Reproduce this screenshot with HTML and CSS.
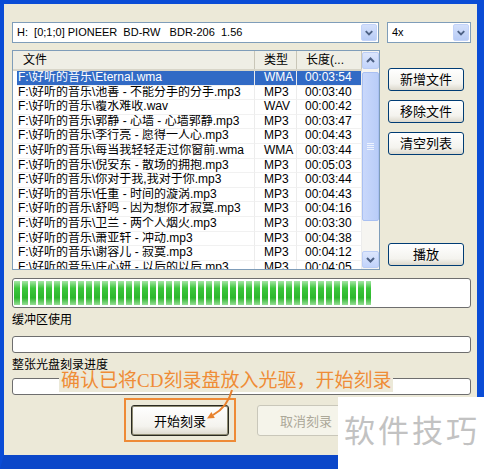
FILE: index.html
```html
<!DOCTYPE html>
<html lang="zh-CN">
<head>
  <meta charset="UTF-8">
  <title>刻录</title>
  <link rel="stylesheet" href="styles.css">
</head>
<body>
<div class="page">
  <div class="window">

    <div class="toolbar">
      <div class="combo combo-drive">
        <span class="combo-text">H:  [0;1;0] PIONEER  BD-RW   BDR-206  1.56</span>
        <span class="combo-btn"><svg width="15" height="17" viewBox="0 0 15 17"><path d="M4 7 L7.5 10.5 L11 7" fill="none" stroke="#4D6185" stroke-width="2"/></svg></span>
      </div>
      <div class="combo combo-speed">
        <span class="combo-text">4x</span>
        <span class="combo-btn"><svg width="15" height="17" viewBox="0 0 15 17"><path d="M4 7 L7.5 10.5 L11 7" fill="none" stroke="#4D6185" stroke-width="2"/></svg></span>
      </div>
    </div>

    <div class="main">
      <div class="listview">
        <div class="lv-cols">
          <div class="lv-header">
            <div class="hd hd-file">文件</div>
            <div class="hd">类型</div>
            <div class="hd">长度(...</div>
          </div>
          <div class="lv-body">
            <div class="row selected"><div class="cell cell-file">F:\好听的音乐\Eternal.wma</div><div class="cell">WMA</div><div class="cell cell-len">00:03:54</div></div>
            <div class="row"><div class="cell cell-file">F:\好听的音乐\池善 - 不能分手的分手.mp3</div><div class="cell">MP3</div><div class="cell cell-len">00:03:40</div></div>
            <div class="row"><div class="cell cell-file">F:\好听的音乐\覆水难收.wav</div><div class="cell">WAV</div><div class="cell cell-len">00:00:42</div></div>
            <div class="row"><div class="cell cell-file">F:\好听的音乐\郭静 - 心墙 - 心墙郭静.mp3</div><div class="cell">MP3</div><div class="cell cell-len">00:03:47</div></div>
            <div class="row"><div class="cell cell-file">F:\好听的音乐\李行亮 - 愿得一人心.mp3</div><div class="cell">MP3</div><div class="cell cell-len">00:04:43</div></div>
            <div class="row"><div class="cell cell-file">F:\好听的音乐\每当我轻轻走过你窗前.wma</div><div class="cell">WMA</div><div class="cell cell-len">00:03:44</div></div>
            <div class="row"><div class="cell cell-file">F:\好听的音乐\倪安东 - 散场的拥抱.mp3</div><div class="cell">MP3</div><div class="cell cell-len">00:05:03</div></div>
            <div class="row"><div class="cell cell-file">F:\好听的音乐\你对于我,我对于你.mp3</div><div class="cell">MP3</div><div class="cell cell-len">00:03:44</div></div>
            <div class="row"><div class="cell cell-file">F:\好听的音乐\任重 - 时间的漩涡.mp3</div><div class="cell">MP3</div><div class="cell cell-len">00:04:43</div></div>
            <div class="row"><div class="cell cell-file">F:\好听的音乐\舒鸣 - 因为想你才寂寞.mp3</div><div class="cell">MP3</div><div class="cell cell-len">00:04:16</div></div>
            <div class="row"><div class="cell cell-file">F:\好听的音乐\卫兰 - 两个人烟火.mp3</div><div class="cell">MP3</div><div class="cell cell-len">00:03:30</div></div>
            <div class="row"><div class="cell cell-file">F:\好听的音乐\萧亚轩 - 冲动.mp3</div><div class="cell">MP3</div><div class="cell cell-len">00:04:38</div></div>
            <div class="row"><div class="cell cell-file">F:\好听的音乐\谢容儿 - 寂寞.mp3</div><div class="cell">MP3</div><div class="cell cell-len">00:04:12</div></div>
            <div class="row"><div class="cell cell-file">F:\好听的音乐\庄心妍 - 以后的以后.mp3</div><div class="cell">MP3</div><div class="cell cell-len">00:04:05</div></div>
          </div>
        </div>
        <div class="scrollbar">
          <div class="sb-btn"><svg width="15" height="15" viewBox="0 0 15 15"><path d="M4 9 L7.5 5.5 L11 9" fill="none" stroke="#4D6185" stroke-width="2"/></svg></div>
          <div class="sb-thumb"><span></span><span></span><span></span><span></span></div>
          <div class="sb-track"></div>
          <div class="sb-btn"><svg width="15" height="15" viewBox="0 0 15 15"><path d="M4 6 L7.5 9.5 L11 6" fill="none" stroke="#4D6185" stroke-width="2"/></svg></div>
        </div>
      </div>

      <div class="side-buttons">
        <button class="btn btn-side">新增文件</button>
        <button class="btn btn-side">移除文件</button>
        <button class="btn btn-side">清空列表</button>
        <button class="btn btn-side btn-play">播放</button>
      </div>
    </div>

    <div class="progress progress-main"><div class="progress-fill" style="width:357px"></div></div>
    <div class="label">缓冲区使用</div>
    <div class="progress progress-thin"></div>
    <div class="label">整张光盘刻录进度</div>
    <div class="progress progress-thin progress-last"></div>

    <div class="actions">
      <button class="btn btn-start">开始刻录</button>
      <button class="btn btn-cancel" disabled>取消刻录</button>
    </div>
  </div>

  <!-- annotation drawn over the dialog -->
  <div class="callout-text">确认已将CD刻录盘放入光驱，开始刻录</div>
  <div class="callout-box"></div>
  <svg class="callout-arrow" width="484" height="469" viewBox="0 0 484 469">
    <path d="M232 390 C229 402 222 410 213 415" fill="none" stroke="#E8822E" stroke-width="2"/>
    <polygon points="207,418.5 214.8,418.1 211.4,412.1" fill="#E8822E"/>
  </svg>

  <div class="watermark">软件技巧</div>
</div>
</body>
</html>
```

FILE: styles.css
```css
* { box-sizing: border-box; margin: 0; padding: 0; }

body { font: 12px "Liberation Sans", "Noto Sans CJK SC", sans-serif; color: #000; background: #ECE9D8; }

.page { position: relative; width: 484px; height: 469px; overflow: hidden; }

.window { height: 469px; display: flex; flex-direction: column; background: #ECE9D8;
  border-top: 4px solid #0A4CD6; border-left: 4px solid #0A4CD6; border-right: 7px solid #0A4CD6; border-bottom: 14px solid #0B47C9; }

/* combo boxes */
.toolbar { display: flex; gap: 8px; margin: 18px 6px 0 8px; height: 21px; }
.combo { display: flex; align-items: center; background: #fff; border: 1px solid #7F9DB9; padding: 1px; }
.combo-drive { width: 367px; }
.combo-speed { width: 84px; }
.combo-text { flex: 1; padding-left: 3px; font-size: 11px; line-height: 17px; white-space: pre; overflow: hidden; }
.combo-btn { width: 16px; height: 17px; display: flex; align-items: center; justify-content: center;
  background: linear-gradient(#D4E0FB, #B8CCF6); border: 1px solid #C3D3F9; border-radius: 2px; }

/* file list */
.main { display: flex; margin: 7px 0 0 8px; height: 220px; }
.listview { width: 368px; display: flex; background: #fff; border: 1px solid #7F9DB9; }
.lv-cols { width: 349px; overflow: hidden; }
.lv-header { display: grid; grid-template-columns: 242px 42px 65px; height: 20px; background: #EFEEE5; border-bottom: 2px solid #D8D5C8; }
.hd { line-height: 18px; padding-left: 9px; border-right: 1px solid #C9C6B8; }
.hd-file { padding-left: 10px; }
.row { display: grid; grid-template-columns: 242px 42px 65px; height: 14.6px; }
.cell { line-height: 13.6px; padding-left: 9px; white-space: nowrap; overflow: hidden;
  border-right: 1px solid #ECECEC; border-bottom: 1px solid #F1F1F1; background-clip: padding-box; }
.cell-file { margin-left: 4px; padding-left: 1px; }
.cell-len { padding-left: 8px; }
.row.selected .cell { background-color: #316AC5; color: #fff; }

.scrollbar { width: 17px; display: flex; flex-direction: column; background: #F6F5F1; padding: 1px 0; }
.sb-btn { height: 17px; display: flex; align-items: center; justify-content: center;
  background: linear-gradient(#DCE6FC, #C1D3FB); border: 1px solid #BBCDF5; border-radius: 2px; }
.sb-thumb { margin-top: 3px; height: 149px; display: flex; flex-direction: column; align-items: center; justify-content: center; gap: 1px;
  background: linear-gradient(90deg, #C9D8FB, #B9CDF8); border: 1px solid #A9C0F2; border-radius: 2px; }
.sb-thumb span { width: 7px; height: 1px; background: #EEF3FE; }
.sb-track { flex: 1; }

.side-buttons { display: flex; flex-direction: column; margin-left: 8px; }
.btn { font: 13px "Liberation Sans", "Noto Sans CJK SC", sans-serif; color: #000; border: 1px solid #003C74; border-radius: 3px;
  background: linear-gradient(#FFFFFF, #F4F3EE 70%, #DCD8CC); }
.btn-side { width: 76px; height: 23px; margin-top: 9px; line-height: 20px; }
.btn-side:first-child { margin-top: 18px; }
.btn-play { margin-top: auto; margin-bottom: 4px; }

/* progress bars */
.progress { margin: 0 6px 0 8px; background: #fff; border: 1px solid #6E6E6E; border-radius: 3px; }
.progress-main { margin-top: 8px; height: 30px; padding: 2px 1px; }
.progress-fill { height: 100%;
  background: repeating-linear-gradient(90deg, transparent 0 6px, #fff 6px 8px),
              linear-gradient(#A7E6A7, #3CC63C 30%, #2DB72D 70%, #96DE96); }
.progress-thin { margin-top: 8px; height: 17px; }
.progress-last { margin-top: 5px; }
.label { margin: 4px 0 0 8px; line-height: 16px; }

.actions { display: flex; gap: 28px; margin: 10px 0 0 127px; }
.btn-start { width: 98px; height: 31px; border: 1px solid #2A2A22; box-shadow: inset 0 0 0 1px #8E8B72; }
.btn-cancel { width: 98px; height: 31px; border-color: #C9C7BA; color: #ACA899; background: #F5F4EA; }

/* annotation overlay */
.callout-text { position: absolute; left: 59px; top: 370px; padding: 0 2px; background: #ECE9D8;
  font: 19px "Liberation Serif", "Noto Sans CJK SC", serif; line-height: 22px; color: #EF8C36; white-space: nowrap; }
.callout-box { position: absolute; left: 124px; top: 398px; width: 112px; height: 44px; border: 2px solid #EE8A36; }
.callout-arrow { position: absolute; left: 0; top: 0; pointer-events: none; }

.watermark { position: absolute; left: 338px; top: 397px; right: 0; bottom: 0; background: #fff;
  padding: 14px 0 0 6px; font: 31px "Noto Sans CJK SC", sans-serif; letter-spacing: 3px; line-height: 36px; color: #C2C2C2; }
```
